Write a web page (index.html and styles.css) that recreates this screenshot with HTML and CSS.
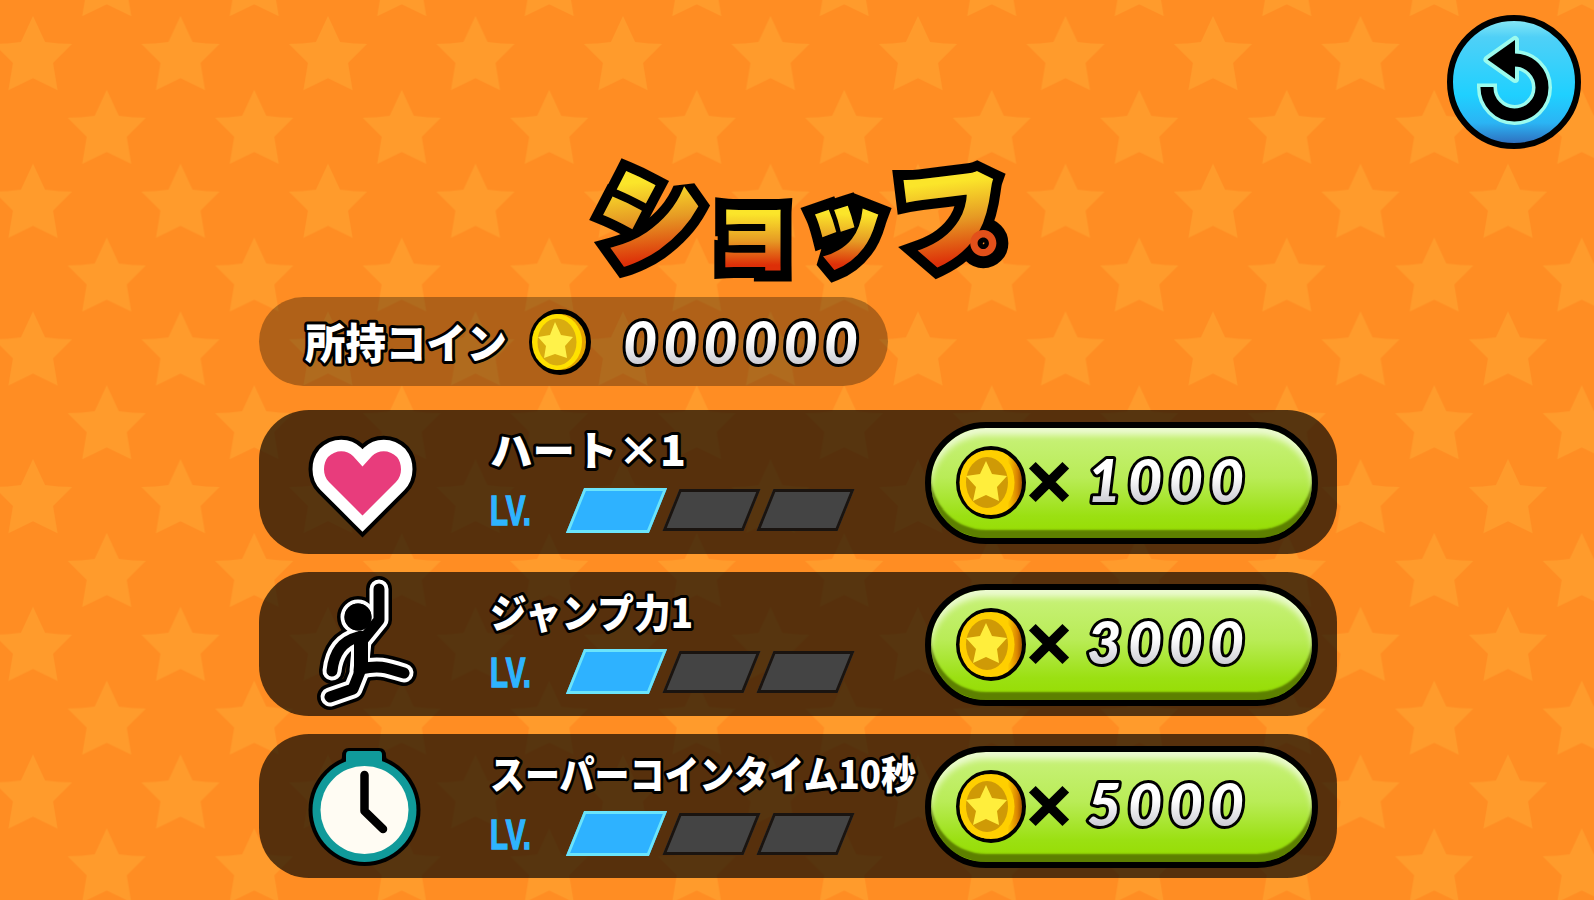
FILE: index.html
```
<!DOCTYPE html>
<html lang="ja">
<head>
  <meta charset="UTF-8">
  <meta name="viewport" content="width=device-width, initial-scale=1.0">
  <title>ショップ</title>
  <link rel="stylesheet" href="styles.css">
</head>
<body>
  <svg class="bg" width="1594" height="900">
    <defs>
      <pattern id="stars" width="147.5" height="147.7" patternUnits="userSpaceOnUse" patternTransform="translate(33 16)">
        <g fill="#ff9b2c">
          <path id="bgstar" d="M0 0L12 26Q25 28 39 28L20 47L24.5 74L0 62L-24.5 74L-20 47L-39 28Q-25 28 -12 26Z"/>
          <use href="#bgstar" x="147.5"/>
          <use href="#bgstar" x="73.75" y="73.85"/>
        </g>
      </pattern>
      <linearGradient id="silver" x1="0" y1="0" x2="0" y2="1">
        <stop offset="0.45" stop-color="#ffffff"/>
        <stop offset="0.8" stop-color="#cfcfd6"/>
      </linearGradient>
      <linearGradient id="gold" gradientUnits="userSpaceOnUse" x1="0" y1="-48" x2="0" y2="46">
        <stop offset="0.15" stop-color="#fbe52a"/>
        <stop offset="0.55" stop-color="#e69a24"/>
        <stop offset="1" stop-color="#dd2f08"/>
      </linearGradient>
      <linearGradient id="gold-small" gradientUnits="userSpaceOnUse" x1="0" y1="-28" x2="0" y2="32">
        <stop offset="0.15" stop-color="#fbe52a"/>
        <stop offset="0.6" stop-color="#e69a24"/>
        <stop offset="1" stop-color="#dd2f08"/>
      </linearGradient>
      <linearGradient id="coin-side">
        <stop offset="0.75" stop-color="#ffd000"/>
        <stop offset="0.9" stop-color="#d98200"/>
        <stop offset="1" stop-color="#8a4300"/>
      </linearGradient>
      <linearGradient id="sky" x1="0" y1="0" x2="0" y2="1">
        <stop offset="0" stop-color="#8eeaf5"/>
        <stop offset="0.15" stop-color="#4fd0f7"/>
        <stop offset="0.6" stop-color="#1fd0ff"/>
        <stop offset="0.82" stop-color="#2bb4f4"/>
        <stop offset="1" stop-color="#2f66b8"/>
      </linearGradient>
      <symbol id="coin" viewBox="0 0 70 73">
        <ellipse cx="35" cy="36.5" rx="33" ry="34.5" fill="url(#coin-side)" stroke="#000" stroke-width="4"/>
        <ellipse cx="31" cy="36.5" rx="27.5" ry="32" fill="#ffcf00"/>
        <ellipse cx="31" cy="36.5" rx="21" ry="25.5" fill="#cf9a06"/>
        <path d="M30 15L36 28L51 30L41 41L43 55L30 49L17 55L20 41L10 30L24 28Z" fill="#ffee3c"/>
      </symbol>
      <symbol id="coin-bright" viewBox="0 0 62 66">
        <ellipse cx="31" cy="33" rx="28.5" ry="30.5" fill="#e5a500" stroke="#000" stroke-width="5"/>
        <ellipse cx="28" cy="33" rx="25" ry="28" fill="#ffe100"/>
        <ellipse cx="28" cy="33" rx="19.5" ry="23.5" fill="#d9ac10"/>
        <path d="M26 13L32 26L44 28L36 37L38 49L26 45L15 49L17 37L9 28L21 26Z" fill="#fff24a"/>
      </symbol>
    </defs>
    <rect width="1594" height="900" fill="#ff8d23"/>
    <rect width="1594" height="900" fill="url(#stars)"/>
  </svg>

  <button class="back">
    <svg width="136" height="136" viewBox="0 0 136 136">
      <circle cx="68" cy="68" r="64" fill="url(#sky)" stroke="#000" stroke-width="6"/>
      <g fill="none" stroke="#9bfbee">
        <path d="M41 69.5V73.5A27.5 27.5 0 1 0 68.5 46" stroke-width="20"/>
        <path d="M41.5 45.5L69 26V65Z" fill="#9bfbee" stroke-width="8" stroke-linejoin="round"/>
      </g>
      <path d="M41 73A27.5 27.5 0 1 0 68.5 46" fill="none" stroke="#000" stroke-width="13"/>
      <path d="M41.5 45.5L69 26V65Z"/>
    </svg>
  </button>

  <main class="shop">
    <h1 aria-label="ショップ">
      <svg class="title" width="440" height="140" viewBox="580 145 440 140">
        <g class="title-outline">
          <text font-size="104" transform="translate(651 215) rotate(-6)" y="40">シ</text>
          <text font-size="88" transform="translate(753 233)" y="28">ョ</text>
          <text font-size="88" transform="translate(845 233) rotate(2) scale(0.92 1)" y="27">ッ</text>
          <text font-size="108" transform="translate(951 216) rotate(-7)" y="41">フ</text>
          <text font-size="108" transform="translate(1021 218)" y="102">゜</text>
        </g>
        <g class="title-fill" aria-hidden="true">
          <text font-size="104" transform="translate(651 215) rotate(-6)" y="40">シ</text>
          <text class="small" font-size="88" transform="translate(753 233)" y="28">ョ</text>
          <text class="small" font-size="88" transform="translate(845 233) rotate(2) scale(0.92 1)" y="27">ッ</text>
          <text font-size="108" transform="translate(951 216) rotate(-7)" y="41">フ</text>
          <text class="ring" font-size="108" transform="translate(1021 218)" y="102">゜</text>
        </g>
      </svg>
    </h1>

    <div class="wallet">
      <svg class="label" width="202" height="50"><text x="0" y="42" font-size="42" textLength="202" lengthAdjust="spacingAndGlyphs">所持コイン</text></svg>
      <svg class="coin" width="62" height="66"><use href="#coin-bright"/></svg>
      <svg class="digits" width="240" height="60"><text x="0" y="52" textLength="235">000000</text></svg>
    </div>

    <ul class="items">
      <li class="item">
        <div class="icon">
          <svg width="110" height="130" viewBox="308 417 110 130">
            <defs>
              <path id="heart" d="M362.5 515.5L329 482C322 475 323 463 328 457C336 449 347 450 353 456L362.5 466.5L372 456C378 450 389 449 397 457C402 463 403 475 396 482Z"/>
            </defs>
            <use href="#heart" class="heart-edge"/>
            <use href="#heart" class="heart-white"/>
            <use href="#heart" fill="#e83c7c"/>
          </svg>
        </div>
        <div class="info">
          <svg class="label" width="196" height="50"><text x="0" y="38" font-size="41" textLength="196" lengthAdjust="spacingAndGlyphs">ハート×1</text></svg>
          <div class="level">
            <svg class="lv" width="42" height="40"><text x="0" y="35" textLength="41" lengthAdjust="spacingAndGlyphs">LV.</text></svg>
            <span class="slot on"></span><span class="slot"></span><span class="slot"></span>
          </div>
        </div>
        <button class="buy">
          <svg class="coin" width="70" height="73"><use href="#coin"/></svg>
          <svg class="times" width="40" height="40"><text x="19" y="40">×</text></svg>
          <svg class="digits" width="162" height="60"><text x="0" y="49" textLength="157">1000</text></svg>
        </button>
      </li>

      <li class="item">
        <div class="icon">
          <svg width="110" height="144" viewBox="307 572 110 144">
            <defs>
              <g id="jumper">
                <circle cx="357" cy="617" r="8"/>
                <path d="M378 589V620L361 641L358 671"/>
                <path d="M360 636L359 669"/>
                <path d="M357 637C342 641 333 652 331 671"/>
                <path d="M360 669C377 665 384 667 403 673"/>
                <path d="M360 669L352 689L329 697"/>
              </g>
            </defs>
            <use href="#jumper" class="jumper-edge"/>
            <use href="#jumper" class="jumper-line"/>
            <use href="#jumper" class="jumper-body"/>
            <path d="M360 634V670" stroke="#000" stroke-width="14"/>
            <circle cx="357" cy="617" r="13.5"/>
          </svg>
        </div>
        <div class="info">
          <svg class="label" width="202" height="50"><text x="0" y="38" font-size="40" textLength="203" lengthAdjust="spacingAndGlyphs">ジャンプ力1</text></svg>
          <div class="level">
            <svg class="lv" width="42" height="40"><text x="0" y="35" textLength="41" lengthAdjust="spacingAndGlyphs">LV.</text></svg>
            <span class="slot on"></span><span class="slot"></span><span class="slot"></span>
          </div>
        </div>
        <button class="buy">
          <svg class="coin" width="70" height="73"><use href="#coin"/></svg>
          <svg class="times" width="40" height="40"><text x="19" y="40">×</text></svg>
          <svg class="digits" width="162" height="60"><text x="0" y="49" textLength="157">3000</text></svg>
        </button>
      </li>

      <li class="item">
        <div class="icon">
          <svg width="116" height="124" viewBox="305 744 116 124">
            <path d="M349 752H379Q382 752 382 756L384 768H345L346 756Q346 752 349 752Z" fill="#000" stroke="#000" stroke-width="8" stroke-linejoin="round"/>
            <circle cx="364.5" cy="810" r="56"/>
            <circle cx="364.5" cy="810" r="52" fill="#109a9a"/>
            <path d="M349 751H379Q382 751 382 755V768H346V755Q346 751 349 751Z" fill="#109a9a"/>
            <circle cx="364.5" cy="810" r="44" fill="#fffcf3"/>
            <path d="M364.5 775V811L383 829" fill="none" stroke="#000" stroke-width="8.5" stroke-linecap="round" stroke-linejoin="round"/>
          </svg>
        </div>
        <div class="info">
          <svg class="label" width="426" height="50"><text x="0" y="37" font-size="39" textLength="426" lengthAdjust="spacingAndGlyphs">スーパーコインタイム10秒</text></svg>
          <div class="level">
            <svg class="lv" width="42" height="40"><text x="0" y="35" textLength="41" lengthAdjust="spacingAndGlyphs">LV.</text></svg>
            <span class="slot on"></span><span class="slot"></span><span class="slot"></span>
          </div>
        </div>
        <button class="buy">
          <svg class="coin" width="70" height="73"><use href="#coin"/></svg>
          <svg class="times" width="40" height="40"><text x="19" y="40">×</text></svg>
          <svg class="digits" width="162" height="60"><text x="0" y="49" textLength="157">5000</text></svg>
        </button>
      </li>
    </ul>
  </main>
</body>
</html>
```
FILE: styles.css
```
* {
  box-sizing: border-box;
  padding: 0;
  margin: 0;
}
body {
  width: 1594px;
  height: 900px;
  overflow: hidden;
  background: #ff8d23;
  font-family: "Noto Sans CJK JP", "Noto Sans", sans-serif;
}
svg {
  display: block;
  overflow: visible;
  flex-shrink: 0;
}
button {
  border: none;
  background: none;
  font: inherit;
  cursor: pointer;
}
.bg {
  position: absolute;
  top: 0;
  left: 0;
  z-index: -1;
  overflow: hidden;
}
.back {
  position: absolute;
  top: 13.5px;
  right: 12.5px;
}
.shop {
  width: 1078px;
  margin-left: 259px;
  padding-top: 145px;
}

/* title */
h1 {
  height: 152px;
  padding-left: 321px;
}
.title text {
  font-weight: 900;
  text-anchor: middle;
}
.title-outline {
  stroke: #000;
  stroke-width: 24;
  stroke-linejoin: miter;
  stroke-miterlimit: 2;
}
.title-fill text {
  fill: url(#gold);
  stroke: url(#gold);
  stroke-width: 4;
}
.title-fill .small {
  fill: url(#gold-small);
  stroke: url(#gold-small);
  stroke-width: 2;
}
.title-fill .ring {
  fill: #e2501a;
  stroke: none;
}

/* owned coins */
.wallet {
  display: flex;
  align-items: center;
  width: 629px;
  height: 89px;
  padding-left: 46px;
  border-radius: 45px;
  background: rgba(0, 0, 0, 0.31);
}
.wallet .coin {
  margin-left: 22px;
}
.wallet .digits {
  margin-left: 32px;
}
.label text {
  font-weight: 900;
  fill: #fff;
  stroke: #000;
  stroke-width: 6;
  stroke-linejoin: round;
  paint-order: stroke;
}
.digits text {
  font-family: Lato, "Open Sans", sans-serif;
  font-size: 59px;
  font-weight: 900;
  font-style: italic;
  fill: url(#silver);
  stroke: #000;
  stroke-width: 6;
  stroke-linejoin: round;
  paint-order: stroke;
}

/* item rows */
.items {
  display: flex;
  flex-direction: column;
  gap: 17.5px;
  margin-top: 24px;
  list-style: none;
}
.item {
  display: flex;
  align-items: center;
  height: 144.3px;
  padding-right: 19px;
  border-radius: 50px;
  background: rgba(0, 0, 0, 0.66);
}
.icon {
  display: flex;
  justify-content: center;
  width: 231px;
  padding-right: 23px;
}
.heart-edge {
  stroke: #000;
  stroke-width: 31;
}
.heart-white {
  stroke: #fff;
  stroke-width: 23;
}
.jumper-edge,
.jumper-line,
.jumper-body {
  fill: none;
  stroke: #000;
  stroke-width: 26;
  stroke-linecap: round;
  stroke-linejoin: round;
}
.jumper-line {
  stroke: #fff;
  stroke-width: 19;
}
.jumper-body {
  stroke-width: 11;
}
.info {
  width: 435px;
  height: 144px;
  padding-top: 18px;
}
.level {
  display: flex;
  align-items: center;
  height: 46px;
  margin-top: 9px;
}
.lv text {
  font-family: "Liberation Sans", sans-serif;
  font-size: 43px;
  font-weight: bold;
  fill: #2eb4ff;
  stroke: #2eb4ff;
  stroke-width: 1.5;
}
.slot {
  width: 81px;
  height: 42px;
  margin-left: 13.5px;
  background: #444;
  border: 3px solid #1a1410;
  transform: skewX(-22deg);
}
.slot.on {
  width: 83px;
  height: 45px;
  margin-left: 43px;
  margin-right: -1px;
  background: #2eb2ff;
  border: 3px solid #6be4fb;
}

/* buy button */
.buy {
  display: flex;
  align-items: center;
  width: 393px;
  height: 122px;
  margin-top: 2px;
  padding-left: 25px;
  border: 6px solid #000;
  border-radius: 62px;
  background: linear-gradient(#c9f27c, #b9ec57 45%, #9be012 80%, #96dc00);
  box-shadow: inset 0 8px 6px -1px rgba(255, 255, 255, 0.65), inset 0 -8px 2px #5d8000;
}
.buy .coin {
  margin-top: -1px;
}
.buy .times {
  margin-left: 4px;
}
.buy .digits {
  margin-left: 17px;
}
.times text {
  font-size: 54px;
  font-weight: 900;
  text-anchor: middle;
  stroke: #000;
  stroke-width: 3;
}
```
